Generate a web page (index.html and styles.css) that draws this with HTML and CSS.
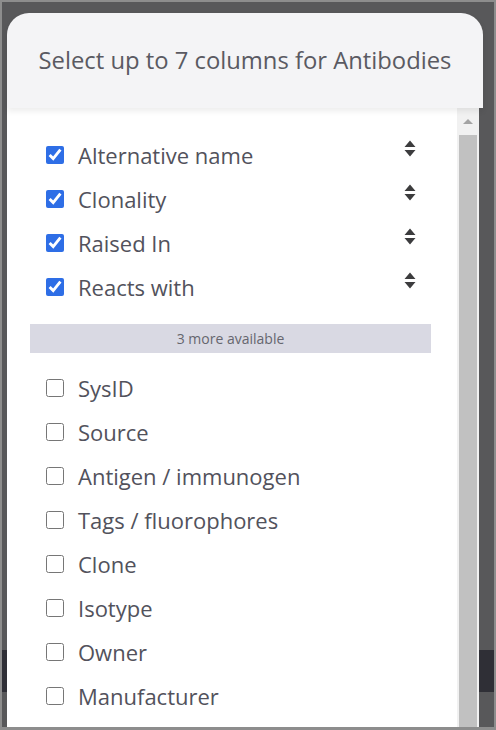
FILE: index.html
```html
<!DOCTYPE html>
<html lang="en">
<head>
<meta charset="utf-8">
<title>Select columns</title>
<link rel="stylesheet" href="styles.css">
</head>
<body>
<div class="frame">
  <div class="modal">
    <div class="modal-header">
      <h1 class="title">Select up to 7 columns for Antibodies</h1>
    </div>
    <div class="modal-body">
      <div class="list">
        <label class="row"><input type="checkbox" checked><span class="label">Alternative name</span><svg class="sort" viewBox="0 0 12 18"><path d="M6 0.5 L11.5 7 H0.5 Z M0.5 10 H11.5 L6 16.5 Z"/></svg></label>
        <label class="row"><input type="checkbox" checked><span class="label">Clonality</span><svg class="sort" viewBox="0 0 12 18"><path d="M6 0.5 L11.5 7 H0.5 Z M0.5 10 H11.5 L6 16.5 Z"/></svg></label>
        <label class="row"><input type="checkbox" checked><span class="label">Raised In</span><svg class="sort" viewBox="0 0 12 18"><path d="M6 0.5 L11.5 7 H0.5 Z M0.5 10 H11.5 L6 16.5 Z"/></svg></label>
        <label class="row"><input type="checkbox" checked><span class="label">Reacts with</span><svg class="sort" viewBox="0 0 12 18"><path d="M6 0.5 L11.5 7 H0.5 Z M0.5 10 H11.5 L6 16.5 Z"/></svg></label>
        <div class="more">3 more available</div>
        <label class="row"><input type="checkbox"><span class="label">SysID</span></label>
        <label class="row"><input type="checkbox"><span class="label">Source</span></label>
        <label class="row"><input type="checkbox"><span class="label">Antigen / immunogen</span></label>
        <label class="row"><input type="checkbox"><span class="label">Tags / fluorophores</span></label>
        <label class="row"><input type="checkbox"><span class="label">Clone</span></label>
        <label class="row"><input type="checkbox"><span class="label">Isotype</span></label>
        <label class="row"><input type="checkbox"><span class="label">Owner</span></label>
        <label class="row"><input type="checkbox"><span class="label">Manufacturer</span></label>
      </div>
      <div class="scrollbar">
        <div class="arrow"></div>
        <div class="thumb"></div>
      </div>
    </div>
  </div>
</div>
</body>
</html>
```

FILE: styles.css
```css
* { box-sizing: border-box; }
html, body { margin: 0; padding: 0; }
body {
  width: 496px;
  height: 730px;
  overflow: hidden;
  font-family: "Open Sans", "Lato", sans-serif;
}
.frame {
  width: 496px;
  height: 730px;
  border: 2px solid #8d8d8d;
  border-bottom-width: 3px;
  background: linear-gradient(to bottom, #58585a 0, #58585a 648px, #2f2f36 648px, #2f2f36 690px, #58585a 690px);
  padding: 11px 0 0 5px;
  overflow: hidden;
}
.modal {
  width: 476px;
  height: 714px;
  display: flex;
  flex-direction: column;
}
.modal-header {
  height: 95px;
  flex: none;
  background: #f4f4f6;
  border-radius: 22px 22px 0 0;
  display: flex;
  align-items: center;
  justify-content: center;
  position: relative;
  z-index: 1;
  box-shadow: 0 3px 6px rgba(0, 0, 0, 0.08);
}
.title {
  margin: 0;
  font-size: 23.8px;
  font-weight: 400;
  color: #5a5a62;
  padding-bottom: 2px;
  white-space: nowrap;
}
.modal-body {
  flex: 1;
  display: flex;
  margin-right: 4px;
  min-height: 0;
}
.list {
  flex: 1;
  background: #fff;
  padding: 25px 26px 0 23px;
}
.row {
  display: flex;
  align-items: center;
  height: 44px;
  padding-left: 16px;
  padding-right: 15px;
}
.row input {
  width: 18px;
  height: 18px;
  margin: 0;
  accent-color: #2e6ee6;
  flex: none;
}
.label {
  margin-left: 14px;
  font-size: 22px;
  color: #52525c;
  flex: 1;
  white-space: nowrap;
}
.sort {
  width: 12px;
  height: 18px;
  fill: #3c3c3e;
  margin-top: -12px;
}
.more {
  margin: 15px 0 13px;
  height: 29px;
  background: #d9d9e3;
  color: #66666e;
  font-size: 14px;
  display: flex;
  align-items: center;
  justify-content: center;
}
.scrollbar {
  width: 22px;
  flex: none;
  background: #f1f1f1;
  display: flex;
  flex-direction: column;
  align-items: center;
}
.arrow {
  margin-top: 11px;
  width: 0;
  height: 0;
  border-left: 5px solid transparent;
  border-right: 5px solid transparent;
  border-bottom: 5px solid #a3a3a3;
}
.thumb {
  margin-top: 11px;
  width: 18px;
  flex: 1;
  background: #c1c1c1;
}
```
